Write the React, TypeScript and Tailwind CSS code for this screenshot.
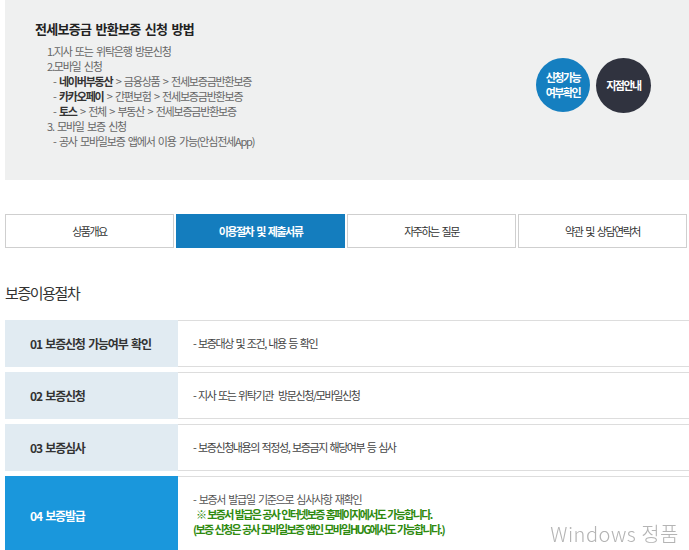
import React from "react";

const steps = [
  { no: "01", title: "보증신청 가능여부 확인", desc: "- 보증대상 및 조건, 내용 등 확인" },
  { no: "02", title: "보증신청", desc: "- 지사 또는 위탁기관  방문신청/모바일신청" },
  { no: "03", title: "보증심사", desc: "- 보증신청내용의 적정성, 보증금지 해당여부 등 심사" },
];

const tabs = ["상품개요", "이용절차 및 제출서류", "자주하는 질문", "약관 및 상담연락처"];

export default function App() {
  return (
    <div
      className="relative min-h-screen overflow-hidden bg-white pl-[5px] [word-spacing:2px]"
      style={{ fontFamily: '"Noto Sans CJK KR", "Noto Sans", sans-serif' }}
    >
      {/* 신청 방법 안내 박스 */}
      <section className="flex h-[180px] justify-between bg-[#eff0f0]">
        <div className="pl-[30px] pt-[17px]">
          <h2 className="text-[13px] font-bold leading-[24px] tracking-[-0.7px] text-[#222]">
            전세보증금 반환보증 신청 방법
          </h2>
          <ul className="mt-[3px] pl-[12px] text-[11px] leading-[15px] tracking-[-1.2px] text-[#666]">
            <li>1.지사 또는 위탁은행 방문신청</li>
            <li>2.모바일 신청</li>
            <li className="pl-[6px]">
              - <b className="text-[#333]">네이버부동산</b> &gt; 금융상품 &gt; 전세보증금반환보증
            </li>
            <li className="pl-[6px]">
              - <b className="text-[#333]">카카오페이</b> &gt; 간편보험 &gt; 전세보증금반환보증
            </li>
            <li className="pl-[6px]">
              - <b className="text-[#333]">토스</b> &gt; 전체 &gt; 부동산 &gt; 전세보증금반환보증
            </li>
            <li>3. 모바일 보증 신청</li>
            <li className="pl-[6px]">- 공사 모바일보증 앱에서 이용 가능(안심전세App)</li>
          </ul>
        </div>
        <div className="mr-[38px] mt-[58px] flex gap-[6px] self-start">
          <a className="flex h-[54px] w-[54px] flex-col items-center justify-center rounded-full bg-[#157fc0] text-center text-[11px] font-bold leading-[15px] tracking-[-1.5px] text-white">
            <span>신청가능</span>
            <span>여부확인</span>
          </a>
          <a className="flex h-[55px] w-[55px] items-center justify-center rounded-full bg-[#30333f] text-[11px] font-bold tracking-[-1.5px] text-white">
            지점안내
          </a>
        </div>
      </section>

      {/* 탭 메뉴 */}
      <nav className="mt-[34px] flex gap-[2px]">
        {tabs.map((t, i) => (
          <div
            key={t}
            className={`flex h-[34px] w-[169px] shrink-0 items-center justify-center text-[11px] tracking-[-1.5px] ${
              i === 1
                ? "bg-[#147dbe] font-bold text-white"
                : "border border-[#cfcfcf] bg-white text-[#333]"
            }`}
          >
            {t}
          </div>
        ))}
      </nav>

      <h3 className="mt-[35px] text-[15px] leading-[20px] tracking-[-1.4px] text-[#333]">보증이용절차</h3>

      {/* 절차 목록 */}
      <div className="mt-[17px] flex flex-col gap-[5px]">
        {steps.map((s) => (
          <div key={s.no} className="flex h-[47px]">
            <div className="flex w-[173px] shrink-0 items-center bg-[#e1ebf2] pl-[25px] text-[12px] font-bold tracking-[-1.2px] text-[#333]">
              {s.no} {s.title}
            </div>
            <div className="flex flex-1 items-center whitespace-pre border-y border-[#dddddd] pl-[15px] text-[11px] tracking-[-1.4px] text-[#444] [word-spacing:1.5px]">
              {s.desc}
            </div>
          </div>
        ))}
        <div className="flex h-[80px]">
          <div className="flex w-[173px] shrink-0 items-center bg-[#1a97dc] pl-[25px] text-[12px] font-bold tracking-[-1.2px] text-white">
            04 보증발급
          </div>
          <div className="flex-1 border-t border-[#dddddd] pl-[15px] pt-[15px] text-[11px] leading-[15px] tracking-[-1.3px]">
            <p className="text-[#555]">- 보증서 발급일 기준으로 심사사항 재확인</p>
            <p className="pl-[3px] font-bold tracking-[-1.6px] text-[#2e8a0e] [word-spacing:1px]">
              ※ 보증서 발급은 공사 인터넷보증 홈페이지에서도 가능합니다.
            </p>
            <p className="font-bold tracking-[-1.6px] text-[#2e8a0e] [word-spacing:1px]">
              (보증 신청은 공사 모바일보증 앱인 모바일HUG에서도 가능합니다.)
            </p>
          </div>
        </div>
      </div>

      {/* 워터마크 */}
      <div className="pointer-events-none fixed bottom-[4px] right-[10px] text-[20px] font-light leading-[24px] tracking-[0.5px] text-[#b4b4b4] [word-spacing:0px]">
        Windows 정품
      </div>
    </div>
  );
}
